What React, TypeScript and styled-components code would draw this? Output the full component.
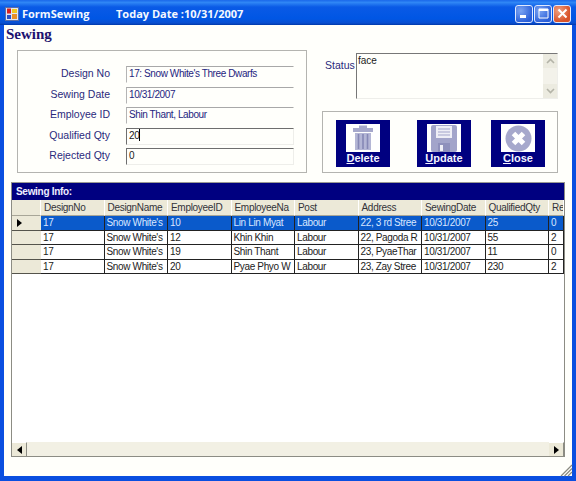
import React from "react"
import styled, { createGlobalStyle } from "styled-components"

const GlobalStyle = createGlobalStyle`
    html, body { margin: 0; padding: 0; background: #0a4fe0; }
    body { font-family: "Liberation Sans", Arial, sans-serif; overflow: hidden; }
`

const Frame = styled.div`
    width: 576px;
    height: 481px;
    display: flex;
    flex-direction: column;
    position: relative;
    overflow: hidden;
    background: #0a4fe0;
`

const TitleBar = styled.div`
    height: 25px;
    flex: none;
    box-sizing: border-box;
    display: flex;
    align-items: center;
    padding: 2px 5px 0 5px;
    color: #f4f8ff;
    font: bold 11px "Open Sans", "Noto Sans", sans-serif;
    background: linear-gradient(180deg, #1a68ea 0%, #2f86f5 10%, #0a5ae6 28%, #0056e4 75%, #0a4fd0 92%, #0038a8 100%);
`

const AppName = styled.span`
    margin-left: 3px;
    width: 94px;
`

const TitleButtons = styled.div`
    margin-left: auto;
    display: flex;
    gap: 1px;
`

const TitleButton = styled.div<{ $close?: boolean }>`
    width: 16px;
    height: 16px;
    border: 1px solid #dfe9ff;
    border-radius: 3px;
    background: ${p => p.$close
        ? "radial-gradient(circle at 30% 30%, #f0a080, #d8532a 70%)"
        : "radial-gradient(circle at 30% 30%, #7ba4f2, #2a5fd8 75%)"};
    display: flex;
    align-items: center;
    justify-content: center;
`

const Client = styled.div`
    flex: 1;
    min-height: 0;
    margin: 0 4px 5px;
    background: #fffffb;
    display: flex;
    flex-direction: column;
`

const Heading = styled.div`
    height: 25px;
    flex: none;
    box-sizing: border-box;
    padding: 1px 0 0 2px;
    color: #1c1270;
    font: bold 15px "Liberation Serif", "DejaVu Serif", serif;
`

const TopArea = styled.div`
    display: flex;
    flex: none;
    padding-left: 13px;
    gap: 15px;
`

const GroupBox = styled.div`
    width: 290px;
    height: 123px;
    box-sizing: border-box;
    border: 1px solid #b4b4b0;
    padding-top: 15px;
    display: grid;
    grid-template-columns: 92px 168px;
    grid-auto-rows: 17px;
    column-gap: 16px;
    row-gap: 3.5px;
`

const Label = styled.div`
    text-align: right;
    font-size: 10.5px;
    line-height: 15px;
    color: #2a2a7c;
`

const Field = styled.div<{ $editable?: boolean }>`
    box-sizing: border-box;
    padding-left: 2px;
    font-size: 10px;
    letter-spacing: -0.4px;
    line-height: 14px;
    white-space: nowrap;
    color: ${p => (p.$editable ? "#202020" : "#252580")};
    border-top: 1px solid ${p => (p.$editable ? "#6e6e6e" : "#a8a8a8")};
    border-left: 1px solid ${p => (p.$editable ? "#6e6e6e" : "#b4b4b4")};
    border-right: 1px solid ${p => (p.$editable ? "#eeeeea" : "transparent")};
    border-bottom: 1px solid ${p => (p.$editable ? "#eeeeea" : "transparent")};
`

const Caret = styled.span`
    display: inline-block;
    width: 1px;
    height: 12px;
    background: #000;
    vertical-align: -2px;
`

const RightColumn = styled.div`
    width: 236px;
    padding-top: 3px;
    display: flex;
    flex-direction: column;
    gap: 12px;
`

const StatusRow = styled.div`
    height: 46px;
    display: flex;
`

const StatusLabel = styled(Label)`
    flex: none;
    width: 34px;
    box-sizing: border-box;
    padding: 5px 0 0 3px;
    text-align: left;
    white-space: nowrap;
`

const StatusBox = styled.div`
    flex: 1;
    box-sizing: border-box;
    display: flex;
    justify-content: space-between;
    border-top: 1px solid #777;
    border-left: 1px solid #777;
    border-right: 1px solid #eeeeea;
    border-bottom: 1px solid #eeeeea;
    font-size: 10px;
    line-height: 13px;
    color: #222;
    padding-left: 1px;
`

const VScroll = styled.div`
    width: 14px;
    background: #f3f2ea;
    display: flex;
    flex-direction: column;
    justify-content: space-between;
`

const VArrow = styled.div`
    height: 14px;
    background: #ecebe0;
    display: flex;
    align-items: center;
    justify-content: center;
`

const ButtonPanel = styled.div`
    height: 62px;
    box-sizing: border-box;
    border: 1px solid #b4b4b0;
    padding: 8px 0 0 13px;
    display: flex;
    align-items: flex-start;
`

const ActionButton = styled.div<{ $gap?: number }>`
    width: 54px;
    height: 47px;
    margin-left: ${p => p.$gap ?? 0}px;
    box-sizing: border-box;
    padding-top: 4px;
    background: #000080;
    display: flex;
    flex-direction: column;
    align-items: center;
    color: #f4f4ff;
    font-size: 11px;
    font-weight: bold;
    line-height: 13px;
`

const ActionIcon = styled.div`
    width: 34px;
    height: 28px;
    background: #fff;
    display: flex;
    align-items: center;
    justify-content: center;
`

const AccessKey = styled.span`
    text-decoration: underline;
`

const DataGrid = styled.div`
    flex: 1;
    min-height: 0;
    margin: 9px 7px 19px;
    box-sizing: border-box;
    border: 1px solid #8c8c84;
    border-top-color: #9a9a94;
    display: flex;
    flex-direction: column;
    background: #fff;
`

const Caption = styled.div`
    height: 17px;
    flex: none;
    box-sizing: border-box;
    padding: 2px 0 0 4px;
    background: #000080;
    color: #eef;
    font-size: 10px;
    letter-spacing: -0.3px;
    font-weight: bold;
    line-height: 14px;
`

const GridRow = styled.div`
    display: grid;
    grid-template-columns: 29px repeat(8, 63.5px) 1fr;
    flex: none;
    overflow: hidden;
`

const HeaderCell = styled.div`
    height: 16px;
    box-sizing: border-box;
    padding: 1px 0 0 3px;
    background: #ece9d8;
    color: #33333a;
    font-size: 10px;
    letter-spacing: -0.3px;
    line-height: 14px;
    white-space: nowrap;
    overflow: hidden;
    border-right: 1px solid #fff;
    border-bottom: 1px solid #a8a698;
`

const RowHead = styled.div`
    height: 14.5px;
    box-sizing: border-box;
    background: #ece9d8;
    border-bottom: 1px solid #55544c;
    display: flex;
    align-items: center;
    padding-left: 5px;
`

const Cell = styled.div<{ $selected?: boolean }>`
    height: 14.5px;
    box-sizing: border-box;
    padding-left: 2px;
    font-size: 10px;
    letter-spacing: -0.35px;
    line-height: 13px;
    white-space: nowrap;
    overflow: hidden;
    color: ${p => (p.$selected ? "#d8e6ff" : "#222")};
    background: ${p => (p.$selected ? "#0a5acb" : "#fff")};
    border-right: 1px solid #222;
    border-bottom: 1px solid #222;
`

const GridSpace = styled.div`
    flex: 1;
    background: #fff;
`

const HScroll = styled.div`
    height: 14px;
    flex: none;
    display: flex;
    justify-content: space-between;
    background: #f2f0e4;
`

const HArrow = styled.div`
    width: 15px;
    background: #ece9d8;
    border-top: 1px solid #fff;
    border-right: 1px solid #8c8c84;
    box-sizing: border-box;
    display: flex;
    align-items: center;
    justify-content: center;
`

const Grip = styled.svg`
    position: absolute;
    right: 3px;
    bottom: 4px;
`

const AppIcon = () => (
    <svg width="14" height="14" viewBox="0 0 14 14">
        <rect x="0.5" y="0.5" width="13" height="13" fill="#dfe6f5" stroke="#5a6ea8" />
        <rect x="2" y="1.5" width="4" height="5" fill="#d82020" />
        <rect x="7" y="2" width="5" height="4" fill="#f0c820" />
        <rect x="2" y="8" width="4" height="4" fill="#2a50c8" />
        <rect x="7" y="7" width="5" height="5" fill="#e89028" />
    </svg>
)

const TrashIcon = () => (
    <svg width="22" height="26" viewBox="0 0 22 26">
        <rect x="7" y="0.5" width="8" height="2.5" fill="#a6a8cc" />
        <rect x="1" y="3" width="20" height="4" fill="#a6a8cc" />
        <path d="M3 8h16v17H3z" fill="#b4b6d6" />
        <path d="M6.5 9v15M11 9v15M15.5 9v15" stroke="#8688b6" strokeWidth="1.6" />
    </svg>
)

const SaveIcon = () => (
    <svg width="26" height="27" viewBox="0 0 26 27">
        <path d="M2 0h22a2 2 0 0 1 2 2v23a2 2 0 0 1-2 2H2a2 2 0 0 1-2-2V2a2 2 0 0 1 2-2z" fill="#a2a4ca" />
        <rect x="5" y="1" width="16" height="12" fill="#eeeef6" />
        <path d="M7 4h12M7 7h12M7 10h12" stroke="#a2a4ca" />
        <rect x="7" y="18" width="12" height="9" fill="#8e90bc" />
        <rect x="9" y="20" width="3" height="6" fill="#eeeef6" />
    </svg>
)

const CloseIcon = () => (
    <svg width="27" height="27" viewBox="0 0 27 27">
        <circle cx="13.5" cy="13.5" r="13" fill="#a6a8cc" />
        <path d="M8.5 8.5l10 10M18.5 8.5l-10 10" stroke="#fff" strokeWidth="5" />
    </svg>
)

const Triangle = ({ dir }: { dir: "left" | "right" }) => (
    <svg width="5" height="8" viewBox="0 0 5 8">
        <path d={dir === "left" ? "M5 0v8L0 4z" : "M0 0v8l5-4z"} fill="#000" />
    </svg>
)

const Chevron = ({ up }: { up?: boolean }) => (
    <svg width="9" height="6" viewBox="0 0 9 6">
        <path d={up ? "M1 5l3.5-3.5L8 5" : "M1 1l3.5 3.5L8 1"} fill="none" stroke="#b4b4a8" strokeWidth="1.6" />
    </svg>
)

const columns = ["DesignNo", "DesignName", "EmployeeID", "EmployeeNa", "Post", "Address", "SewingDate", "QualifiedQty", "Re"]

const rows = [
    ["17", "Snow White's", "10", "Lin Lin Myat", "Labour", "22, 3 rd Stree", "10/31/2007", "25", "0"],
    ["17", "Snow White's", "12", "Khin Khin", "Labour", "22, Pagoda R", "10/31/2007", "55", "2"],
    ["17", "Snow White's", "19", "Shin Thant", "Labour", "23, PyaeThar", "10/31/2007", "11", "0"],
    ["17", "Snow White's", "20", "Pyae Phyo W", "Labour", "23, Zay Stree", "10/31/2007", "230", "2"],
]

export default function App() {
    return (
        <>
            <GlobalStyle />
            <Frame>
                <TitleBar>
                    <AppIcon />
                    <AppName>FormSewing</AppName>
                    <span>Today Date :10/31/2007</span>
                    <TitleButtons>
                        <TitleButton>
                            <svg width="11" height="11" viewBox="0 0 11 11"><rect x="1" y="7" width="6" height="3" fill="#fff" /></svg>
                        </TitleButton>
                        <TitleButton>
                            <svg width="11" height="11" viewBox="0 0 11 11"><path d="M1 1h9v9H1z" fill="none" stroke="#fff" /><rect x="1" y="1" width="9" height="2" fill="#fff" /></svg>
                        </TitleButton>
                        <TitleButton $close>
                            <svg width="11" height="11" viewBox="0 0 11 11"><path d="M1.5 1.5l8 8M9.5 1.5l-8 8" stroke="#fff" strokeWidth="2" /></svg>
                        </TitleButton>
                    </TitleButtons>
                </TitleBar>
                <Client>
                    <Heading>Sewing</Heading>
                    <TopArea>
                        <GroupBox>
                            <Label>Design No</Label>
                            <Field>17: Snow White's Three Dwarfs</Field>
                            <Label>Sewing Date</Label>
                            <Field>10/31/2007</Field>
                            <Label>Employee ID</Label>
                            <Field>Shin Thant, Labour</Field>
                            <Label>Qualified Qty</Label>
                            <Field $editable>20<Caret /></Field>
                            <Label>Rejected Qty</Label>
                            <Field $editable>0</Field>
                        </GroupBox>
                        <RightColumn>
                            <StatusRow>
                                <StatusLabel>Status</StatusLabel>
                                <StatusBox>
                                    face
                                    <VScroll>
                                        <VArrow><Chevron up /></VArrow>
                                        <VArrow><Chevron /></VArrow>
                                    </VScroll>
                                </StatusBox>
                            </StatusRow>
                            <ButtonPanel>
                                <ActionButton>
                                    <ActionIcon><TrashIcon /></ActionIcon>
                                    <span><AccessKey>D</AccessKey>elete</span>
                                </ActionButton>
                                <ActionButton $gap={27}>
                                    <ActionIcon><SaveIcon /></ActionIcon>
                                    <span><AccessKey>U</AccessKey>pdate</span>
                                </ActionButton>
                                <ActionButton $gap={20}>
                                    <ActionIcon><CloseIcon /></ActionIcon>
                                    <span><AccessKey>C</AccessKey>lose</span>
                                </ActionButton>
                            </ButtonPanel>
                        </RightColumn>
                    </TopArea>
                    <DataGrid>
                        <Caption>Sewing Info:</Caption>
                        <GridRow>
                            <HeaderCell />
                            {columns.map(c => <HeaderCell key={c}>{c}</HeaderCell>)}
                        </GridRow>
                        {rows.map((row, i) => (
                            <GridRow key={row[2]}>
                                <RowHead>{i === 0 && <Triangle dir="right" />}</RowHead>
                                {row.map((v, j) => <Cell key={j} $selected={i === 0}>{v}</Cell>)}
                            </GridRow>
                        ))}
                        <GridSpace />
                        <HScroll>
                            <HArrow><Triangle dir="left" /></HArrow>
                            <HArrow><Triangle dir="right" /></HArrow>
                        </HScroll>
                    </DataGrid>
                </Client>
                <Grip width="13" height="13" viewBox="0 0 13 13">
                    <path d="M12 1L1 12M12 4.5L4.5 12M12 8L8 12" stroke="#8a8a80" strokeWidth="1.2" />
                </Grip>
            </Frame>
        </>
    )
}
